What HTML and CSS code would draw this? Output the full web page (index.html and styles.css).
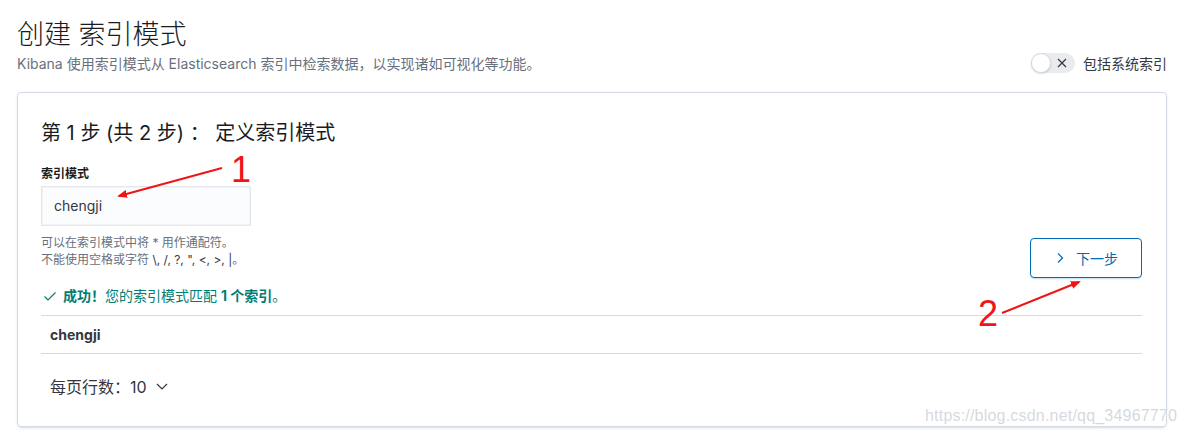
FILE: index.html
```html
<!DOCTYPE html>
<html lang="zh">
<head>
<meta charset="utf-8">
<link rel="stylesheet" href="styles.css">
</head>
<body>
<div class="page">
  <header class="head">
    <div class="head-text">
      <h1 class="title">创建 索引模式</h1>
      <p class="subtitle">Kibana 使用索引模式从 Elasticsearch 索引中检索数据，以实现诸如可视化等功能。</p>
    </div>
    <label class="switch">
      <span class="switch-track">
        <span class="switch-knob"></span>
        <svg class="switch-x" width="12" height="12" viewBox="0 0 12 12"><path d="M2 2L10 10M10 2L2 10" stroke="#343741" stroke-width="1.2" fill="none"/></svg>
      </span>
      <span class="switch-label">包括系统索引</span>
    </label>
  </header>

  <section class="panel">
    <h2 class="step">第 1 步 (共 2 步) ： 定义索引模式</h2>
    <div class="form-row">
      <div class="form">
        <div class="field-label">索引模式</div>
        <div class="input">chengji</div>
        <div class="help">
          <div>可以在索引模式中将 * 用作通配符。</div>
          <div>不能使用空格或字符 <b>\, /, ?, ", &lt;, &gt;, |</b>。</div>
        </div>
      </div>
      <button class="next">
        <svg width="12" height="12" viewBox="0 0 12 12"><path d="M4 1.5L8.5 6L4 10.5" stroke="#006bb4" stroke-width="1.2" fill="none"/></svg>
        <span>下一步</span>
      </button>
    </div>
    <div class="success">
      <svg width="14" height="14" viewBox="0 0 14 14"><path d="M1.5 7.5L5 11L12.5 3.5" stroke="#017d73" stroke-width="1.2" fill="none"/></svg>
      <span><b>成功！</b>您的索引模式匹配 <b>1 个索引</b>。</span>
    </div>
    <div class="table">
      <div class="row">chengji</div>
    </div>
    <div class="pager">
      <span>每页行数：10</span>
      <svg width="14" height="14" viewBox="0 0 14 14"><path d="M2 5L7 10L12 5" stroke="#343741" stroke-width="1.2" fill="none"/></svg>
    </div>
  </section>

  <svg class="annot" width="1177" height="440" viewBox="0 0 1177 440">
    <defs>
      <marker id="ah" markerWidth="10" markerHeight="8" refX="8" refY="4" orient="auto" markerUnits="userSpaceOnUse">
        <path d="M0 0L10 4L0 8Z" fill="#f01414"/>
      </marker>
    </defs>
    <line x1="222" y1="168" x2="119" y2="196" stroke="#f01414" stroke-width="2" marker-end="url(#ah)"/>
    <text x="231" y="182" class="num">1</text>
    <line x1="1002" y1="313" x2="1079" y2="282" stroke="#f01414" stroke-width="2" marker-end="url(#ah)"/>
    <text x="978" y="326" class="num">2</text>
  </svg>
  <div class="watermark">https://blog.csdn.net/qq_34967770</div>
</div>
</body>
</html>
```

FILE: styles.css
```css
* { box-sizing: border-box; }
html, body { margin: 0; padding: 0; background: #fff; }
body {
  font-family: "Inter", "Noto Sans CJK SC", sans-serif;
  color: #343741;
  width: 1177px;
  height: 440px;
  overflow: hidden;
}
.page { position: relative; padding: 15px 10px 0 17px; }
.head { display: flex; justify-content: space-between; align-items: flex-end; }
.title {
  margin: 0;
  font-size: 27px;
  font-weight: 300;
  line-height: 39px;
  color: #1a1c21;
}
.subtitle {
  margin: 0;
  font-size: 14px;
  line-height: 20px;
  color: #69707d;
}
.switch { display: flex; align-items: center; gap: 8px; margin-bottom: 1px; }
.switch-track {
  position: relative;
  width: 44px;
  height: 20px;
  border-radius: 10px;
  background: #e9ebef;
  display: flex;
  align-items: center;
  justify-content: flex-end;
  padding-right: 7px;
}
.switch-knob {
  position: absolute;
  left: 0;
  top: 0;
  width: 20px;
  height: 20px;
  border-radius: 50%;
  background: #fff;
  border: 1px solid #d3dae6;
  box-shadow: 0 1px 2px rgba(0,0,0,0.15);
}
.switch-label { font-size: 14px; color: #343741; }
.panel {
  margin-top: 18px;
  border: 1px solid #d3dae6;
  border-radius: 4px;
  box-shadow: 0 2px 2px -1px rgba(152,162,179,0.3), 0 1px 5px -2px rgba(152,162,179,0.3);
  padding: 24px 24px 24px 23px;
  height: 335px;
}
.step {
  margin: 0;
  font-size: 20px;
  font-weight: 400;
  line-height: 32px;
  color: #1a1c21;
}
.form-row { display: flex; justify-content: space-between; align-items: flex-end; margin-top: 16px; }
.field-label { font-size: 12px; font-weight: 700; line-height: 18px; color: #1a1c21; }
.input {
  margin-top: 3px;
  width: 210px;
  height: 40px;
  background: #fbfcfd;
  border: 1px solid #e4e8ee;
  box-shadow: inset 0 0 0 1px rgba(16,22,26,0.04);
  font-size: 14px;
  line-height: 38px;
  padding-left: 12px;
  color: #343741;
}
.help { margin-top: 8px; font-size: 12px; line-height: 17px; color: #69707d; }
.help b { color: #343741; font-weight: 400; }
.next {
  width: 112px;
  height: 40px;
  border: 1px solid #006bb4;
  border-radius: 4px;
  background: #fff;
  color: #006bb4;
  font-family: inherit;
  font-size: 14px;
  display: flex;
  align-items: center;
  justify-content: center;
  gap: 10px;
  margin-bottom: -10px;
  box-shadow: 0 2px 2px -1px rgba(0,107,180,0.25);
}
.success {
  margin-top: 18px;
  display: flex;
  align-items: center;
  gap: 6px;
  font-size: 14px;
  line-height: 20px;
  color: #017d73;
  padding-left: 2px;
}
.success b { font-weight: 700; }
.table { margin-top: 9px; border-top: 1px solid #d3dae6; border-bottom: 1px solid #d3dae6; }
.row { height: 37px; line-height: 37px; padding-left: 9px; font-size: 14px; font-weight: 700; color: #343741; }
.pager {
  margin-top: 20px;
  padding-left: 9px;
  display: flex;
  align-items: center;
  gap: 8px;
  font-size: 16px;
  color: #343741;
}
.annot { position: absolute; left: 0; top: 0; pointer-events: none; }
.num { font-family: "Liberation Sans", sans-serif; font-size: 36px; fill: #f01414; }
.watermark {
  position: absolute;
  left: 925px;
  top: 407px;
  font-family: "Liberation Sans", sans-serif;
  font-size: 16px;
  color: rgba(170,178,190,0.5);
  text-shadow: 0 0 1px #fff;
  letter-spacing: 0.2px;
}
```
